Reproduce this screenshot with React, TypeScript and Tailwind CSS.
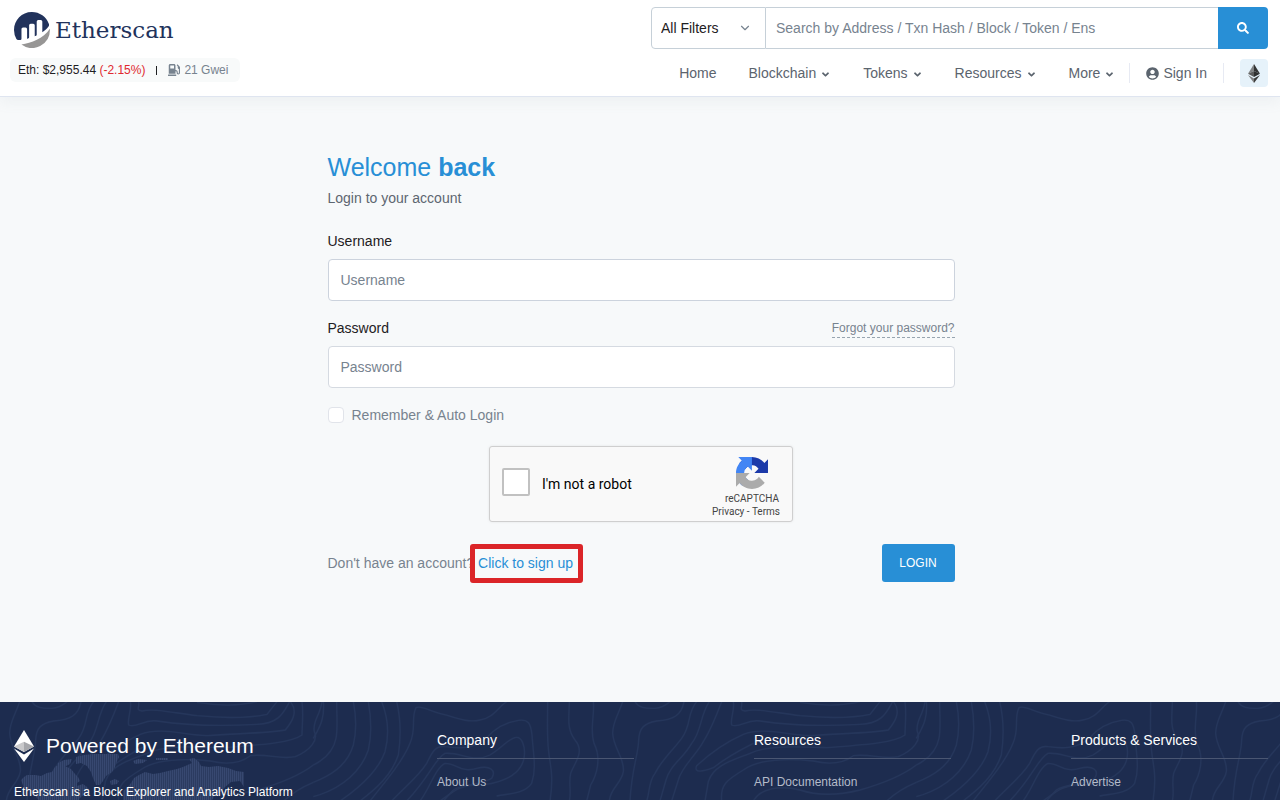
import { FaAngleDown, FaGasPump, FaSearch, FaUserCircle } from "react-icons/fa";
import { ChevronDown } from "lucide-react";

function EtherscanMark() {
  return (
    <svg viewBox="0 0 293.775 293.667" className="h-9 w-9 shrink-0" aria-hidden="true">
      <path
        fill="#21325b"
        d="M61.056,139.615a12.451,12.451,0,0,1,12.511-12.453l20.737.068a12.467,12.467,0,0,1,12.467,12.467v78.414c2.336-.692,5.332-1.43,8.614-2.2a10.389,10.389,0,0,0,8.009-10.11V108.529a12.469,12.469,0,0,1,12.467-12.47h20.779a12.47,12.47,0,0,1,12.467,12.47v90.276s5.2-2.106,9.87-4.07a10.408,10.408,0,0,0,6.369-9.594V77.374a12.466,12.466,0,0,1,12.465-12.467h20.779a12.468,12.468,0,0,1,12.468,12.467v88.625c18.014-13.055,36.271-28.758,50.759-47.639a20.926,20.926,0,0,0,3.185-19.537A146.6,146.6,0,0,0,146.572.012C65.095-1.074,0,65.116,0,146.6a146.321,146.321,0,0,0,19.454,73.417,18.557,18.557,0,0,0,17.707,9.211c3.931-.346,8.825-.836,14.643-1.519a10.383,10.383,0,0,0,9.209-10.306V139.615"
      />
      <path
        fill="#979695"
        d="M60.609,265.3A146.614,146.614,0,0,0,293.2,146.6c0-3.382-.157-6.728-.382-10.054-53.569,79.892-152.482,117.243-232.209,128.754"
      />
    </svg>
  );
}

function RecaptchaMark() {
  return (
    <svg viewBox="0 0 64 64" className="h-8 w-8" aria-hidden="true">
      <path
        fill="#1c3aa9"
        d="M64 31.955l-.033-1.37V4.687l-7.16 7.16C50.948 4.674 42.033.093 32.05.093c-10.4 0-19.622 4.96-25.458 12.64l11.736 11.86a15.55 15.55 0 0 1 4.754-5.334c2.05-1.6 4.952-2.906 8.968-2.906.485 0 .86.057 1.135.163 4.976.393 9.288 3.14 11.828 7.124l-8.307 8.307L64 31.953"
      />
      <path
        fill="#4285f4"
        d="M31.862.094l-1.37.033H4.594l7.16 7.16C4.58 13.147 0 22.06 0 32.046c0 10.4 4.96 19.622 12.64 25.458L24.5 45.768a15.55 15.55 0 0 1-5.334-4.754c-1.6-2.05-2.906-4.952-2.906-8.968 0-.485.057-.86.163-1.135.393-4.976 3.14-9.288 7.124-11.828l8.307 8.307L31.86.095"
      />
      <path
        fill="#ababab"
        d="M.001 32.045l.033 1.37v25.898l7.16-7.16c5.86 7.173 14.774 11.754 24.76 11.754 10.4 0 19.622-4.96 25.458-12.64l-11.736-11.86a15.55 15.55 0 0 1-4.754 5.334c-2.05 1.6-4.952 2.906-8.968 2.906-.485 0-.86-.057-1.135-.163-4.976-.393-9.288-3.14-11.828-7.124l8.307-8.307c-10.522.04-22.4.066-27.295-.005"
      />
    </svg>
  );
}

function EthDark() {
  return (
    <svg viewBox="0 0 12 19" className="h-[19px] w-3" aria-hidden="true">
      <path fill="#828384" d="M6 0 0 9.7 6 7z" />
      <path fill="#343434" d="M6 0v7l6 2.7z" />
      <path fill="#5c5c5c" d="M0 9.7 6 13V7z" />
      <path fill="#2f3030" d="M6 7v6l6-3.3z" />
      <path fill="#828384" d="M0 11 6 19v-4.6z" />
      <path fill="#3c3c3b" d="M6 14.4V19l6-8z" />
    </svg>
  );
}

function EthLight() {
  return (
    <svg viewBox="0 0 20 32" className="h-8 w-5 shrink-0" aria-hidden="true">
      <path fill="#ffffff" d="M10 0 0 16.4 10 22l10-5.6z" />
      <path fill="#c9c9cb" d="M10 11.8 0 16.4 10 22z" />
      <path fill="#a6a7ab" d="M10 11.8v10.2l10-5.6z" />
      <path fill="#ffffff" d="M0 18.6 10 32l10-13.4-10 5.8z" />
    </svg>
  );
}

const contours = [
  "M10 20C14 60 5 90-20 130",
  "M50 20C50 60 54 100 48 130C40 170 10 195-20 210",
  "M100 20C108 60 112 100 100 150C85 200 50 235-20 262",
  "M145 20C152 60 158 110 145 165C125 225 70 280-20 305",
  "M185 20C205 70 208 120 195 170C175 225 130 270 60 318",
  "M230 20C242 70 244 120 235 180C215 240 170 280 120 318",
  "M560 20C535 35 520 70 480 75C440 85 400 65 370 58C330 50 305 30 288 38C272 70 290 100 270 145C250 195 205 250 150 318",
  "M530 303C560 295 610 300 635 265C650 220 640 180 636 120C632 85 625 72 595 76C555 82 525 100 500 128C460 165 410 160 375 155C345 150 335 175 320 205C295 245 250 280 215 318",
  "M360 318C400 290 420 270 470 270C520 270 600 250 612 190C618 155 605 122 585 128C560 135 545 160 510 180C460 205 420 170 375 175C345 190 330 245 260 318",
  "M300 318C330 280 345 220 375 205C410 205 425 235 470 220C510 210 530 225 515 250C490 270 430 265 400 285L370 318",
  "M683 20C683 70 680 120 686 170C690 210 702 240 690 318",
  "M748 20C748 60 738 100 765 135C795 170 765 200 752 235C745 265 755 290 748 318",
  "M820 20C825 60 808 100 822 145C845 190 830 240 812 270L800 318",
  "M908 20C895 60 878 80 878 115C880 160 915 190 910 230C905 265 870 280 868 318",
  "M945 20C955 38 975 41 1005 40C1030 38 1040 28 1050 20",
  "M1092 20C1085 60 1060 75 1010 78C970 85 958 100 956 135C955 180 935 220 930 318",
  "M1130 20C1100 55 1115 90 1085 130C1055 170 1025 195 1005 235C985 260 990 290 980 318",
  "M1168 20C1140 60 1145 110 1115 145C1090 190 1050 210 1038 255L1020 318",
  "M1205 20C1190 60 1175 100 1150 140C1125 185 1085 215 1075 255L1055 318",
  "M1240 20C1245 45 1230 70 1235 90C1260 100 1280 72 1320 78C1400 90 1500 95 1620 88C1690 85 1700 50 1718 20",
  "M1265 20C1268 40 1255 45 1275 48C1310 40 1360 52 1440 62C1520 70 1600 68 1650 58L1680 20",
  "M1440 22C1500 32 1560 35 1620 20",
  "M1720 20C1745 50 1725 80 1705 105C1650 115 1560 115 1470 122C1400 120 1330 95 1270 118C1220 140 1170 175 1130 212C1120 235 1150 230 1180 218C1215 190 1260 165 1300 145",
  "M1755 20C1760 60 1755 90 1755 120C1720 145 1620 150 1520 158C1440 155 1340 150 1290 175C1240 195 1180 210 1165 260L1155 318",
  "M1815 20C1810 60 1785 80 1792 110C1805 135 1780 165 1735 185C1690 195 1650 175 1600 182C1570 205 1530 210 1480 198C1400 190 1320 190 1270 225C1220 255 1200 270 1205 318",
  "M1300 318C1320 280 1380 270 1440 285C1500 305 1560 300 1620 285C1690 265 1750 240 1789 210",
  "M1700 318C1730 290 1770 270 1789 262",
];

function ContourBackdrop() {
  return (
    <svg className="absolute inset-0 h-full w-full" aria-hidden="true">
      <defs>
        <g id="contour-lines" fill="none" stroke="#25365b" strokeWidth="4">
          {contours.map((d) => (
            <path key={d} d={d} />
          ))}
        </g>
        <pattern id="contours" x="320" y="0" width="603" height="98" patternUnits="userSpaceOnUse" viewBox="0 21 1809 294">
          <use href="#contour-lines" x="-1809" />
          <use href="#contour-lines" />
          <use href="#contour-lines" x="1809" />
        </pattern>
      </defs>
      <rect width="100%" height="100%" fill="url(#contours)" />
    </svg>
  );
}

function WorldMap() {
  return (
    <svg viewBox="0 0 224 46" className="absolute bottom-0 left-1.5 h-[46px] w-[224px]" aria-hidden="true">
      <defs>
        <pattern id="map-dots" width="2" height="2" patternUnits="userSpaceOnUse">
          <rect width="2" height="2" fill="#2b3b60" />
          <rect width="1" height="2" fill="#374870" />
        </pattern>
      </defs>
      <g fill="url(#map-dots)">
        <path d="M1 26l3-3 3-2h8l6 1 6-3 5-1 3-5 5-3 5-1v3l6 3 4 5 3 3 2 4-3 2v3l6-2 4 3 3 4-4 3-4 2-3 3v3H20l-3-4-3-4-4-5-6-1z" />
        <path d="M38 9l6-3 8-1-2 5-6 3h-6zM56 3l8-2 10-1h24l1 3-2 4-2 6-3 5-6 4-3 5-3 4h-4l-3-7-2-6-4-6-6-3-5 1z" />
        <path d="M113 7l5-2 9 1-4 3-8 1zM136 4h12v2h-12zM90 27l5-2 4 2-2 3-6 1z" />
        <path d="M103 46v-9l4-3 4-5 3-5 5-3 6-3 8 2 7-1 8-2 9-2 6-2 9-4-3-4 5-1 5 4 2 4 8 1 9-1 10 2 8 3 9 1 9 2 4 3-4 3-6 1-4 6-4-6-9 1-6 5-3 4-7 4-3 5z" />
      </g>
    </svg>
  );
}

const navItems = [
  { label: "Home", menu: false },
  { label: "Blockchain", menu: true },
  { label: "Tokens", menu: true },
  { label: "Resources", menu: true },
  { label: "More", menu: true },
];

const footerColumns = [
  { title: "Company", link: "About Us" },
  { title: "Resources", link: "API Documentation" },
  { title: "Products & Services", link: "Advertise" },
];

function Header() {
  return (
    <header className="flex justify-between border-b border-[#dfe5f0] bg-white pt-[7px] pr-3 pb-[9px] pl-2.5 shadow-[0_6px_12px_rgba(140,152,164,0.08)]">
      <div className="flex flex-col items-start">
        <a href="#home" className="flex items-center gap-[5px] pt-[5px] pl-1" aria-label="Etherscan">
          <EtherscanMark />
          <span className="font-['DejaVu_Serif',serif] text-[23px] leading-9 text-[#21325b]">Etherscan</span>
        </a>
        <div className="mt-[10px] flex h-6 items-center rounded-md bg-[#f8fafa] px-2 text-xs text-[#1e2022]">
          <span>
            Eth: $2,955.44 <span className="text-[#e0292f]">(-2.15%)</span>
          </span>
          <span className="mx-[11px] h-[9px] w-px bg-[#1e2022]" />
          <span className="flex items-center gap-1 pr-1 text-[#77838f]">
            <FaGasPump className="text-[12px]" />
            21 Gwei
          </span>
        </div>
      </div>

      <div className="flex w-[617px] flex-col">
        <form className="flex h-[42px]" onSubmit={(e) => e.preventDefault()}>
          <div className="relative w-[115px] shrink-0">
            <select
              aria-label="Search filter"
              className="h-full w-full appearance-none rounded-l-[4px] border border-[#c6d0d8] bg-white pl-[9px] text-[#1e2022]"
            >
              <option>All Filters</option>
            </select>
            <ChevronDown className="pointer-events-none absolute top-3.5 right-3.5 h-3.5 w-3.5 text-[#77838f]" />
          </div>
          <input
            type="text"
            aria-label="Search"
            placeholder="Search by Address / Txn Hash / Block / Token / Ens"
            className="min-w-0 flex-1 border-y border-[#c6d0d8] bg-white px-2.5 placeholder:text-[#77838f]"
          />
          <button
            type="submit"
            aria-label="Submit search"
            className="flex w-[50px] shrink-0 items-center justify-center rounded-r-[4px] bg-[#288fd6] text-xs text-white"
          >
            <FaSearch />
          </button>
        </form>
        <nav className="mt-[10px] flex h-7 items-center justify-end text-[#5b646e]">
          <ul className="flex items-center gap-8">
            {navItems.map((item) => (
              <li key={item.label}>
                <a href={`#${item.label.toLowerCase()}`} className="flex items-center gap-1">
                  {item.label}
                  {item.menu && <FaAngleDown className="mt-0.5 text-[11px]" />}
                </a>
              </li>
            ))}
          </ul>
          <a href="#login" className="ml-3.5 flex h-5 items-center gap-1 border-x border-[#e7eaf3] px-4">
            <FaUserCircle className="text-[13px]" />
            Sign In
          </a>
          <button type="button" aria-label="Explorers" className="ml-4 flex h-7 w-7 items-center justify-center rounded-[4px] bg-[#e6f2fa]">
            <EthDark />
          </button>
        </nav>
      </div>
    </header>
  );
}

function Recaptcha() {
  return (
    <div className="mx-auto mt-[21px] flex h-[76px] w-[304px] items-center justify-between rounded-[3px] border border-[#cfcfcf] bg-[#f9f9f9] pr-3 pl-3 shadow-[0_0_3px_rgba(0,0,0,0.08)]">
      <div className="flex items-center gap-3">
        <input
          id="robot"
          type="checkbox"
          className="mb-1 h-7 w-7 appearance-none rounded-[2px] border-2 border-[#c1c1c1] bg-white"
        />
        <label htmlFor="robot" className="font-[Roboto,sans-serif] text-sm text-black">
          I'm not a robot
        </label>
      </div>
      <div className="flex flex-col items-end pt-1.5 font-[Roboto,sans-serif] text-[10px] leading-[13px] text-[#444444]">
        <span className="mr-3 mb-[3px]">
          <RecaptchaMark />
        </span>
        <span className="mr-px">reCAPTCHA</span>
        <span>
          <a href="#privacy">Privacy</a> - <a href="#terms">Terms</a>
        </span>
      </div>
    </div>
  );
}

function LoginForm() {
  return (
    <main className="flex-1 pr-3 pl-3.5">
      <form className="mx-auto w-1/2 pt-[54px] pb-[119px]" onSubmit={(e) => e.preventDefault()}>
        <h1 className="text-[25px] leading-8 text-[#288fd6]">
          Welcome <strong className="font-bold">back</strong>
        </h1>
        <p className="mt-[5px] leading-5 text-[#5d6670]">Login to your account</p>

        <label htmlFor="username" className="mt-[23px] block leading-5 text-[#1e2022]">
          Username
        </label>
        <input
          id="username"
          type="text"
          placeholder="Username"
          className="mt-2 block h-[42px] w-full rounded-[4px] border border-[#ccd3dd] bg-white px-3 placeholder:text-[#77838f]"
        />

        <div className="mt-[17px] flex items-center justify-between">
          <label htmlFor="password" className="leading-5 text-[#1e2022]">
            Password
          </label>
          <a href="#forgot" className="border-b border-dashed border-[#97a4af] text-xs leading-[18px] text-[#77838f]">
            Forgot your password?
          </a>
        </div>
        <input
          id="password"
          type="password"
          placeholder="Password"
          className="mt-2 block h-[42px] w-full rounded-[4px] border border-[#d5dae1] bg-white px-3 placeholder:text-[#77838f]"
        />

        <div className="mt-[17px] flex items-center gap-2">
          <input
            id="remember"
            type="checkbox"
            className="h-4 w-4 appearance-none rounded-[4px] border border-[#e1e4ea] bg-white"
          />
          <label htmlFor="remember" className="leading-5 text-[#77838f]">
            Remember & Auto Login
          </label>
        </div>

        <Recaptcha />

        <div className="mt-[22px] flex items-center justify-between">
          <p className="leading-5 text-[#77838f]">
            Don't have an account?{" "}
            <a href="#register" className="relative inline-block text-[#288fd6]">
              Click to sign up
              <span className="pointer-events-none absolute -top-[9px] -right-[10px] -bottom-[10px] -left-2 rounded-[3px] border-[5px] border-[#db2528]" />
            </a>
          </p>
          <button type="submit" className="h-[38px] w-[73px] rounded-[3px] bg-[#288fd6] text-xs text-white">
            LOGIN
          </button>
        </div>
      </form>
    </main>
  );
}

function Footer() {
  return (
    <footer className="relative overflow-hidden bg-[#1d2c4f] text-white">
      <ContourBackdrop />
      <div className="relative grid grid-cols-[303fr_197fr_197fr_197fr] gap-x-[120px] pt-7 pr-3 pl-3.5">
        <div className="relative">
          <WorldMap />
          <div className="relative flex items-center gap-3">
            <EthLight />
            <h2 className="text-[21px] leading-8 whitespace-nowrap">Powered by Ethereum</h2>
          </div>
          <p className="relative mt-[22px] text-xs leading-4 whitespace-nowrap">
            Etherscan is a Block Explorer and Analytics Platform
          </p>
        </div>
        {footerColumns.map((column) => (
          <div key={column.title}>
            <h3 className="border-b border-[#4a5672] pb-2 leading-5">{column.title}</h3>
            <a href="#footer" className="mt-[13px] block text-xs leading-5 text-[#b4bbc9]">
              {column.link}
            </a>
          </div>
        ))}
      </div>
    </footer>
  );
}

export default function App() {
  return (
    <div className="flex min-h-screen flex-col bg-[#f7f9fa] font-['Liberation_Sans',Arial,sans-serif] text-sm">
      <Header />
      <LoginForm />
      <Footer />
    </div>
  );
}
